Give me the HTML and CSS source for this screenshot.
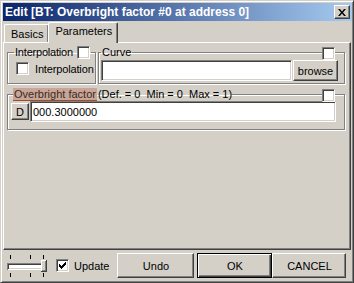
FILE: index.html
```html
<!DOCTYPE html>
<html lang="en">
<head>
    <meta charset="UTF-8">
    <meta name="viewport" content="width=device-width, initial-scale=1.0">
    <title>Edit</title>
    <link rel="stylesheet" href="styles.css">
</head>
<body>
    <div class="window">
        <!-- Caption bar -->
        <div class="titlebar">
            <span class="caption">Edit [BT: Overbright factor #0 at address 0]</span>
            <button class="close" aria-label="Close">
                <svg width="8" height="7" viewBox="0 0 8 7">
                    <path d="M0 0h2l2 2.5L6 0h2L5 3.5 8 7H6L4 4.5 2 7H0l3-3.5z" fill="#000"/>
                </svg>
            </button>
        </div>

        <!-- Tabs -->
        <div class="tabs">
            <div class="tab">Basics</div>
            <div class="tab active">Parameters</div>
        </div>

        <div class="page">
            <div class="row">
                <fieldset class="group interp">
                    <legend>Interpolation<span class="check"></span></legend>
                    <label class="option"><span class="check"></span>Interpolation</label>
                </fieldset>
                <fieldset class="group curve">
                    <legend>Curve</legend>
                    <span class="check corner"></span>
                    <div class="field-row">
                        <input class="text" type="text">
                        <button class="btn browse">browse</button>
                    </div>
                </fieldset>
            </div>

            <fieldset class="group factor">
                <legend><span class="name">Overbright factor</span><span class="range">(Def. = 0  Min = 0  Max = 1)</span></legend>
                <span class="check corner"></span>
                <div class="field-row">
                    <button class="btn small">D</button>
                    <input class="text" type="text" value="000.3000000">
                </div>
            </fieldset>
        </div>

        <!-- Bottom bar -->
        <div class="footer">
            <svg class="slider" width="40" height="22" viewBox="0 0 40 22">
                <g fill="#000">
                    <rect x="3" y="0" width="1" height="4"/>
                    <rect x="23" y="0" width="1" height="4"/>
                    <rect x="36" y="0" width="1" height="4"/>
                    <rect x="3" y="18" width="1" height="4"/>
                    <rect x="23" y="18" width="1" height="4"/>
                    <rect x="36" y="18" width="1" height="4"/>
                </g>
                <rect x="0" y="8" width="39" height="7" fill="#808080"/>
                <rect x="1" y="9" width="38" height="6" fill="#fff"/>
                <rect x="1" y="9" width="37" height="5" fill="#404040"/>
                <rect x="2" y="10" width="36" height="4" fill="#d4d0c8"/>
                <rect x="2" y="10" width="35" height="3" fill="#fff"/>
                <rect x="34" y="5" width="6" height="12" fill="#404040"/>
                <rect x="34" y="5" width="5" height="11" fill="#fff"/>
                <rect x="35" y="6" width="4" height="10" fill="#808080"/>
                <rect x="35" y="6" width="3" height="9" fill="#d4d0c8"/>
            </svg>
            <label class="option update"><span class="check checked">
                <svg width="7" height="7" viewBox="0 0 7 7"><path d="M0 2h1v1h1v1h1V3h1V2h1V1h1V0h1v3h-1v1h-1v1h-1v1h-1v1H2V6H1V5H0z" fill="#000"/></svg>
            </span>Update</label>
            <button class="btn action undo">Undo</button>
            <button class="btn action default">OK</button>
            <button class="btn action cancel">CANCEL</button>
        </div>
    </div>
</body>
</html>
```

FILE: styles.css
```css
* {
    box-sizing: border-box;
}
body {
    margin: 0;
    font-family: "Liberation Sans", Arial, sans-serif;
    font-size: 11px;
    color: #000;
    background-color: #d4d0c8;
}
.window {
    width: 354px;
    height: 283px;
    display: flex;
    flex-direction: column;
    padding: 1px;
    border: 1px solid;
    border-color: #d4d0c8 #404040 #404040 #d4d0c8;
    box-shadow: inset 1px 1px 0 #fff, inset -1px -1px 0 #808080;
    background-color: #d4d0c8;
}
.titlebar {
    height: 18px;
    margin: 1px 0 0 1px;
    display: flex;
    align-items: center;
    padding-left: 2px;
    background: linear-gradient(to right, #0a246a, #a6caf0);
}
.caption {
    color: #fff;
    font-weight: bold;
    font-size: 12px;
    white-space: nowrap;
}
.close {
    margin-left: auto;
    margin-right: 2px;
    width: 16px;
    height: 14px;
    padding: 0;
    display: flex;
    align-items: center;
    justify-content: center;
    background-color: #d4d0c8;
    border: 1px solid;
    border-color: #fff #404040 #404040 #fff;
    box-shadow: inset -1px -1px 0 #808080;
}
.tabs {
    height: 21px;
    display: flex;
    align-items: flex-end;
    padding-left: 2px;
    position: relative;
    z-index: 1;
}
.tab {
    height: 18px;
    padding: 3px 5px 0 6px;
    border: 1px solid;
    border-bottom: none;
    border-color: #fff #404040 #404040 #fff;
    border-radius: 2px 2px 0 0;
    box-shadow: inset -1px 0 0 #808080;
    background-color: #d4d0c8;
}
.tab.active {
    height: 21px;
    margin-left: -1px;
    margin-bottom: -1px;
    padding: 2px 5px 0 6px;
}
.page {
    flex: 1;
    margin-left: 1px;
    margin-right: 1px;
    padding: 3px 3px;
    border: 1px solid;
    border-color: #fff #404040 #404040 #fff;
    box-shadow: inset -1px -1px 0 #808080;
}
.row {
    display: flex;
    gap: 2px;
}
.group {
    position: relative;
    margin: 0;
    min-width: 0;
    border: 1px solid #808080;
    box-shadow: inset 1px 1px 0 #fff, 1px 1px 0 #fff;
}
.group legend {
    display: flex;
    align-items: center;
    height: 13px;
    line-height: 13px;
    padding: 0 1px;
    white-space: pre;
}
.check {
    display: inline-flex;
    align-items: center;
    justify-content: center;
    width: 13px;
    height: 13px;
    flex: none;
    background-color: #fff;
    border: 1px solid;
    border-color: #808080 #fff #fff #808080;
    box-shadow: inset 1px 1px 0 #404040, inset -1px -1px 0 #d4d0c8;
}
.corner {
    position: absolute;
    top: -12px;
    right: 9px;
}
.interp {
    width: 89px;
    height: 38px;
    padding: 3px 0 0 8px;
}
.interp legend {
    margin-left: -2px;
    letter-spacing: -0.2px;
}
.interp legend .check {
    margin-left: 4px;
}
.option {
    display: flex;
    align-items: center;
    gap: 6px;
}
.interp .option {
    letter-spacing: -0.15px;
}
.curve {
    width: 247px;
    height: 38px;
    padding: 1px 0 0 2px;
}
.field-row {
    display: flex;
    align-items: center;
}
.text {
    height: 21px;
    flex: 1;
    font-family: inherit;
    font-size: 11px;
    padding: 2px 2px;
    background-color: #fff;
    border: 1px solid;
    border-color: #808080 #fff #fff #808080;
    box-shadow: inset 1px 1px 0 #404040, inset -1px -1px 0 #d4d0c8;
    outline: none;
}
.curve .text {
    flex: none;
    width: 191px;
}
.btn {
    font-family: inherit;
    font-size: 11px;
    padding: 0;
    background-color: #d4d0c8;
    border: 1px solid;
    border-color: #fff #404040 #404040 #fff;
    box-shadow: inset -1px -1px 0 #808080;
}
.browse {
    width: 45px;
    height: 21px;
    margin-left: 1px;
}
.factor {
    margin-top: 4px;
    width: 338px;
    height: 42px;
    padding: 0 0 0 3px;
}
.factor legend {
    margin-left: 2px;
    padding: 0;
}
.factor .name {
    background-color: #c8a596;
    border-bottom: 1px solid #a34a2b;
    color: #3b2a22;
    padding: 0 1px 0 1px;
    line-height: 12px;
}
.range {
    padding-left: 1px;
}
.small {
    width: 18px;
    height: 17px;
    margin-right: 1px;
}
.factor .text {
    width: 306px;
    flex: none;
}
.footer {
    height: 31px;
    display: flex;
    align-items: center;
    padding: 0 4px 0 5px;
}
.slider {
    margin-right: 9px;
}
.update {
    gap: 5px;
    margin-right: 8px;
}
.action {
    height: 25px;
    width: 77px;
}
.undo {
    margin-right: 3px;
}
.default {
    width: 75px;
    border-color: #000;
    box-shadow: inset 1px 1px 0 #fff, inset -1px -1px 0 #404040, inset -2px -2px 0 #808080;
}
.cancel {
    width: 74px;
}
```
